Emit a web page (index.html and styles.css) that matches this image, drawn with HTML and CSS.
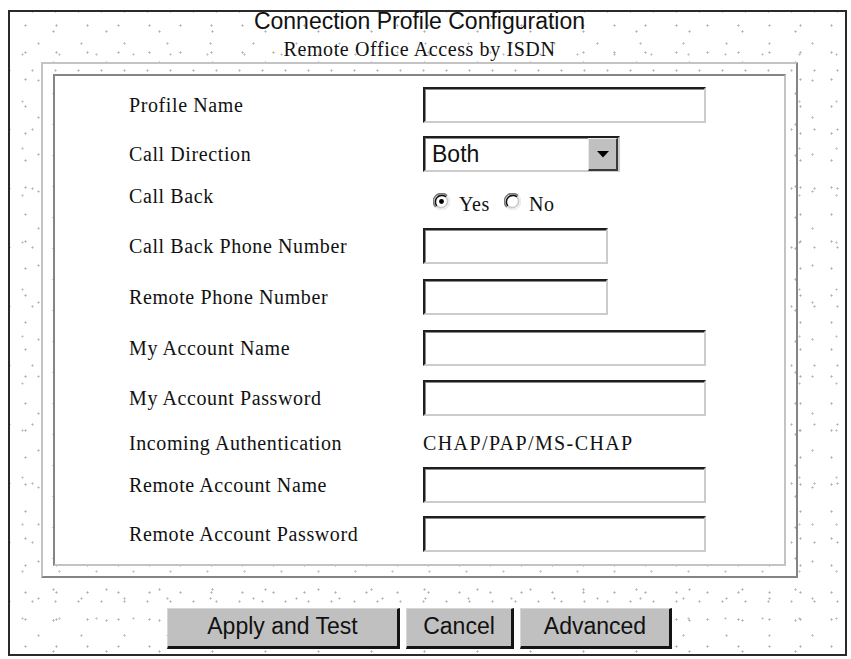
FILE: index.html
```html
<!DOCTYPE html>
<html>
<head>
<meta charset="utf-8">
<title>Connection Profile Configuration</title>
<link rel="stylesheet" href="styles.css">
</head>
<body>
<div class="page">
  <div class="wrap">
    <div class="title">Connection Profile Configuration</div>
    <div class="subtitle">Remote Office Access by ISDN</div>
    <div class="frame">
      <div class="panel">
        <div class="grid">
          <div class="label">Profile Name</div>
          <div class="ctl"><span class="input long"></span></div>

          <div class="label">Call Direction</div>
          <div class="ctl">
            <div class="select">
              <span class="sel-value">Both</span>
              <span class="sel-btn">
                <svg width="12" height="7" viewBox="0 0 12 7"><path d="M0 0H12L6 6.5Z" fill="#000"/></svg>
              </span>
            </div>
          </div>

          <div class="label">Call Back</div>
          <div class="ctl radios">
            <svg class="radio" width="17" height="17" viewBox="0 0 16 16">
              <circle cx="8" cy="8" r="6.6" fill="#fff"/>
              <path d="M2.6 13.4A7.6 7.6 0 0 1 13.4 2.6" fill="none" stroke="#7a7a7a" stroke-width="1.5"/>
              <path d="M13.4 2.6A7.6 7.6 0 0 1 2.6 13.4" fill="none" stroke="#ececec" stroke-width="1.5"/>
              <path d="M3.7 12.3A6.1 6.1 0 0 1 12.3 3.7" fill="none" stroke="#111" stroke-width="1.5"/>
              <path d="M12.3 3.7A6.1 6.1 0 0 1 3.7 12.3" fill="none" stroke="#c8c8c8" stroke-width="1.5"/>
              <circle cx="8" cy="8" r="2.3" fill="#000"/>
            </svg>
            <span class="rtext">Yes</span>
            <svg class="radio no" width="17" height="17" viewBox="0 0 16 16">
              <circle cx="8" cy="8" r="6.6" fill="#fff"/>
              <path d="M2.6 13.4A7.6 7.6 0 0 1 13.4 2.6" fill="none" stroke="#7a7a7a" stroke-width="1.5"/>
              <path d="M13.4 2.6A7.6 7.6 0 0 1 2.6 13.4" fill="none" stroke="#ececec" stroke-width="1.5"/>
              <path d="M3.7 12.3A6.1 6.1 0 0 1 12.3 3.7" fill="none" stroke="#111" stroke-width="1.5"/>
              <path d="M12.3 3.7A6.1 6.1 0 0 1 3.7 12.3" fill="none" stroke="#c8c8c8" stroke-width="1.5"/>
            </svg>
            <span class="rtext">No</span>
          </div>

          <div class="label">Call Back Phone Number</div>
          <div class="ctl"><span class="input short"></span></div>

          <div class="label">Remote Phone Number</div>
          <div class="ctl"><span class="input short"></span></div>

          <div class="label">My Account Name</div>
          <div class="ctl"><span class="input long"></span></div>

          <div class="label">My Account Password</div>
          <div class="ctl"><span class="input long"></span></div>

          <div class="label">Incoming Authentication</div>
          <div class="ctl text">CHAP/PAP/MS-CHAP</div>

          <div class="label">Remote Account Name</div>
          <div class="ctl"><span class="input long"></span></div>

          <div class="label">Remote Account Password</div>
          <div class="ctl"><span class="input long"></span></div>
        </div>
      </div>
    </div>
    <div class="buttons">
      <span class="btn apply">Apply and Test</span>
      <span class="btn cancel">Cancel</span>
      <span class="btn advanced">Advanced</span>
    </div>
  </div>
</div>
</body>
</html>
```

FILE: styles.css
```css
html, body {
  margin: 0;
  padding: 0;
  background: #fff;
}

.page {
  box-sizing: border-box;
  margin: 10px 0 0 8px;
  width: 839px;
  height: 646px;
  border: 2px solid #2a2a2a;
  background-color: #fff;
  background-image:
    radial-gradient(circle, #b0b0b0 0.8px, transparent 1.4px),
    radial-gradient(circle, #b8b8b8 0.8px, transparent 1.4px),
    radial-gradient(circle, #b2b2b2 0.8px, transparent 1.4px),
    radial-gradient(circle, #c0c0c0 0.8px, transparent 1.4px),
    radial-gradient(circle, #b5b5b5 0.8px, transparent 1.4px);
  background-size: 31px 27px, 43px 37px, 53px 31px, 37px 47px, 23px 59px;
  background-position: 0 0, 7px 13px, 17px 4px, 31px 19px, 11px 29px;
}

.wrap {
  margin-left: 31px;
  width: 757px;
}

.title {
  font-family: "Liberation Sans", Arial, sans-serif;
  font-size: 23px;
  line-height: 18px;
  text-align: center;
  color: #111;
}

.subtitle {
  margin-top: 8px;
  font-family: "Liberation Serif", "Times New Roman", serif;
  font-size: 20px;
  letter-spacing: 0.6px;
  line-height: 22px;
  text-align: center;
  color: #111;
}

.frame {
  box-sizing: border-box;
  margin-top: 2px;
  width: 757px;
  height: 516px;
  padding: 10px;
  border: 2px solid;
  border-color: #c4c4c4 #858585 #858585 #c4c4c4;
}

.panel {
  box-sizing: border-box;
  width: 733px;
  height: 492px;
  border: 2px solid;
  border-color: #858585 #c4c4c4 #c4c4c4 #858585;
  background: #fff;
  padding: 11px 0 0 74px;
}

.grid {
  display: grid;
  grid-template-columns: 294px 1fr;
  grid-template-rows: 49px 42px 50px 51px 51px 50px 45px 42px 49px 36px;
  align-items: start;
}

.label,
.ctl {
  height: 36px;
  display: flex;
  align-items: center;
  font-family: "Liberation Serif", "Times New Roman", serif;
  font-size: 20px;
  letter-spacing: 0.6px;
  color: #111;
  white-space: nowrap;
}

.ctl.text {
  letter-spacing: 1.4px;
}

.input {
  box-sizing: border-box;
  display: block;
  height: 36px;
  border: 2px solid;
  border-color: #1e1e1e #cccccc #cccccc #1e1e1e;
  box-shadow: inset 1px 1px 0 #8a8a8a;
  background: #fff;
}

.input.long { width: 283px; }
.input.short { width: 185px; }

.select {
  box-sizing: border-box;
  width: 197px;
  height: 36px;
  display: flex;
  align-items: stretch;
  border: 2px solid;
  border-color: #1e1e1e #cccccc #cccccc #1e1e1e;
  box-shadow: inset 1px 1px 0 #8a8a8a;
  background: #fff;
}

.sel-value {
  flex: 1;
  display: flex;
  align-items: center;
  padding-left: 7px;
  font-family: "Liberation Sans", Arial, sans-serif;
  font-size: 23px;
  letter-spacing: 0;
  color: #111;
}

.sel-btn {
  box-sizing: border-box;
  width: 30px;
  margin-bottom: -1px;
  display: flex;
  align-items: center;
  justify-content: center;
  background: #c0c0c0;
  border-style: solid;
  border-width: 1px 2px 2px 1px;
  border-color: #e8e8e8 #3a3a3a #3a3a3a #e8e8e8;
}

.radios {
  padding-top: 10px;
  padding-left: 10px;
  box-sizing: border-box;
}

.radio {
  flex: none;
  display: block;
}

.radio.no {
  margin-left: 14px;
}

.rtext {
  margin-left: 9px;
  padding-top: 6px;
}

.radio.no + .rtext {
  margin-left: 8px;
}

.buttons {
  margin-top: 30px;
  display: flex;
  justify-content: center;
  gap: 6px;
}

.btn {
  box-sizing: border-box;
  height: 41px;
  display: flex;
  align-items: center;
  justify-content: center;
  padding-bottom: 2px;
  background: #c0c0c0;
  border-style: solid;
  border-width: 1px 3px 3px 1px;
  border-color: #d6d6d6 #141414 #141414 #d6d6d6;
  font-family: "Liberation Sans", Arial, sans-serif;
  font-size: 23px;
  color: #111;
}

.btn.apply { width: 233px; }
.btn.cancel { width: 108px; }
.btn.advanced { width: 152px; }
```
